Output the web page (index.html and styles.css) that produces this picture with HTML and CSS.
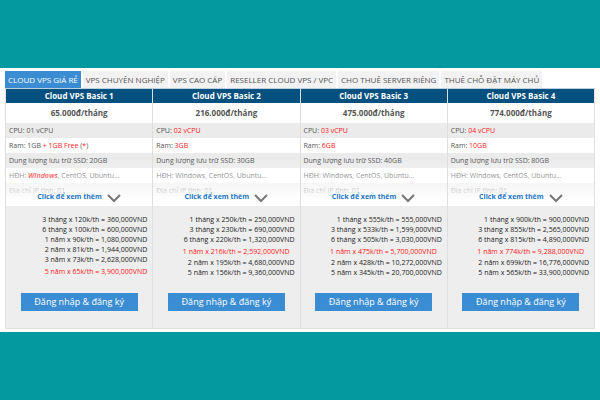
FILE: index.html
```
<!DOCTYPE html>
<html lang="vi">
<head>
    <meta charset="utf-8">
    <title>Cloud VPS</title>
    <link rel="stylesheet" href="styles.css">
</head>
<body>
    <main class="pricing">
        <nav class="tabs">
            <a class="active" href="#">CLOUD VPS GIÁ RẺ</a>
            <a href="#">VPS CHUYÊN NGHIỆP</a>
            <a href="#">VPS CAO CẤP</a>
            <a href="#">RESELLER CLOUD VPS / VPC</a>
            <a href="#">CHO THUÊ SERVER RIÊNG</a>
            <a href="#">THUÊ CHỖ ĐẶT MÁY CHỦ</a>
        </nav>

        <div class="plans">
            <section class="plan">
                <h2>Cloud VPS Basic 1</h2>
                <p class="price">65.000đ/tháng</p>
                <div class="specs">
                    <ul>
                        <li>CPU: 01 vCPU</li>
                        <li>Ram: 1GB <span class="red">+ 1GB Free</span> (<span class="red">*</span>)</li>
                        <li>Dung lượng lưu trữ SSD: 20GB</li>
                        <li>HĐH: <em class="red">Windows</em>, CentOS, Ubuntu...</li>
                        <li>Địa chỉ IP tĩnh: 01</li>
                    </ul>
                    <a class="more" href="#">Click để xem thêm
                        <svg width="14" height="10" viewBox="0 0 14 10"><path d="M1 2l6 6 6-6" /></svg>
                    </a>
                </div>
                <div class="offer">
                    <ul class="terms">
                        <li>3 tháng x 120k/th = 360,000VND</li>
                        <li>6 tháng x 100k/th = 600,000VND</li>
                        <li>1 năm x 90k/th = 1,080,000VND</li>
                        <li>2 năm x 81k/th = 1,944,000VND</li>
                        <li>3 năm x 73k/th = 2,628,000VND</li>
                        <li class="best">5 năm x 65k/th = 3,900,000VND</li>
                    </ul>
                    <button type="button">Đăng nhập &amp; đăng ký</button>
                </div>
            </section>

            <section class="plan">
                <h2>Cloud VPS Basic 2</h2>
                <p class="price">216.000đ/tháng</p>
                <div class="specs">
                    <ul>
                        <li>CPU: <span class="red">02 vCPU</span></li>
                        <li>Ram: <span class="red">3GB</span></li>
                        <li>Dung lượng lưu trữ SSD: 30GB</li>
                        <li>HĐH: Windows, CentOS, Ubuntu...</li>
                        <li>Địa chỉ IP tĩnh: 01</li>
                    </ul>
                    <a class="more" href="#">Click để xem thêm
                        <svg width="14" height="10" viewBox="0 0 14 10"><path d="M1 2l6 6 6-6" /></svg>
                    </a>
                </div>
                <div class="offer">
                    <ul class="terms">
                        <li>1 tháng x 250k/th = 250,000VND</li>
                        <li>3 tháng x 230k/th = 690,000VND</li>
                        <li>6 tháng x 220k/th = 1,320,000VND</li>
                        <li class="best inset">1 năm x 216k/th = 2,592,000VND</li>
                        <li>2 năm x 195k/th = 4,680,000VND</li>
                        <li>5 năm x 156k/th = 9,360,000VND</li>
                    </ul>
                    <button type="button">Đăng nhập &amp; đăng ký</button>
                </div>
            </section>

            <section class="plan">
                <h2>Cloud VPS Basic 3</h2>
                <p class="price">475.000đ/tháng</p>
                <div class="specs">
                    <ul>
                        <li>CPU: <span class="red">03 vCPU</span></li>
                        <li>Ram: <span class="red">6GB</span></li>
                        <li>Dung lượng lưu trữ SSD: 40GB</li>
                        <li>HĐH: Windows, CentOS, Ubuntu...</li>
                        <li>Địa chỉ IP tĩnh: 01</li>
                    </ul>
                    <a class="more" href="#">Click để xem thêm
                        <svg width="14" height="10" viewBox="0 0 14 10"><path d="M1 2l6 6 6-6" /></svg>
                    </a>
                </div>
                <div class="offer">
                    <ul class="terms">
                        <li>1 tháng x 555k/th = 555,000VND</li>
                        <li>3 tháng x 533k/th = 1,599,000VND</li>
                        <li>6 tháng x 505k/th = 3,030,000VND</li>
                        <li class="best inset">1 năm x 475k/th = 5,700,000VND</li>
                        <li>2 năm x 428k/th = 10,272,000VND</li>
                        <li>5 năm x 345k/th = 20,700,000VND</li>
                    </ul>
                    <button type="button">Đăng nhập &amp; đăng ký</button>
                </div>
            </section>

            <section class="plan">
                <h2>Cloud VPS Basic 4</h2>
                <p class="price">774.000đ/tháng</p>
                <div class="specs">
                    <ul>
                        <li>CPU: <span class="red">04 vCPU</span></li>
                        <li>Ram: <span class="red">10GB</span></li>
                        <li>Dung lượng lưu trữ SSD: 80GB</li>
                        <li>HĐH: Windows, CentOS, Ubuntu...</li>
                        <li>Địa chỉ IP tĩnh: 01</li>
                    </ul>
                    <a class="more" href="#">Click để xem thêm
                        <svg width="14" height="10" viewBox="0 0 14 10"><path d="M1 2l6 6 6-6" /></svg>
                    </a>
                </div>
                <div class="offer">
                    <ul class="terms">
                        <li>1 tháng x 900k/th = 900,000VND</li>
                        <li>3 tháng x 855k/th = 2,565,000VND</li>
                        <li>6 tháng x 815k/th = 4,890,000VND</li>
                        <li class="best inset">1 năm x 774k/th = 9,288,000VND</li>
                        <li>2 năm x 699k/th = 16,776,000VND</li>
                        <li>5 năm x 565k/th = 33,900,000VND</li>
                    </ul>
                    <button type="button">Đăng nhập &amp; đăng ký</button>
                </div>
            </section>
        </div>
    </main>
</body>
</html>
```

FILE: styles.css
```
* {
    box-sizing: border-box;
}
body {
    margin: 0;
    padding: 68px 0;
    background: #04999e;
    font-family: "Open Sans", "Noto Sans", sans-serif;
    font-size: 7px;
    color: #555;
}
h2, p, ul {
    margin: 0;
    padding: 0;
}
ul {
    list-style: none;
}
.pricing {
    background: white;
    padding: 3px 5px;
}
.tabs {
    display: flex;
    gap: 2px;
}
.tabs a {
    padding: 0 3px;
    background: #f2f2f2;
    color: #555;
    font-size: 8px;
    line-height: 17px;
    text-decoration: none;
    white-space: nowrap;
}
.tabs a.active {
    background: #3b8dd3;
    color: white;
}
.plans {
    display: grid;
    grid-template-columns: repeat(4, 1fr);
    border-top: 1px solid #b9d3e6;
    border-right: 1px solid #e2e2e2;
}
.plan {
    border-left: 1px solid #dedede;
}
.plan h2 {
    background: #04507f;
    color: white;
    font-size: 8px;
    font-weight: bold;
    line-height: 14px;
    text-align: center;
}
.price {
    font-size: 8px;
    font-weight: bold;
    line-height: 20px;
    text-align: center;
}
.specs {
    position: relative;
    height: 83px;
    overflow: hidden;
}
.specs li {
    padding-left: 3px;
    font-size: 7px;
    line-height: 15px;
}
.specs li:nth-child(odd) {
    background: #ebebeb;
}
.red {
    color: #ff2020;
}
em.red {
    font-weight: bold;
}
/* fades the lower rows out behind the link */
.more {
    position: absolute;
    left: 0;
    right: 0;
    bottom: 0;
    height: 46px;
    padding-top: 32px;
    display: flex;
    justify-content: center;
    gap: 5px;
    background: linear-gradient(rgba(255, 255, 255, 0), rgba(255, 255, 255, 0.7) 65%, white 90%);
    color: #2277c8;
    font-size: 7px;
    font-weight: bold;
    line-height: 10px;
    text-decoration: none;
}
.more svg {
    margin-top: 1px;
    fill: none;
    stroke: #777;
    stroke-width: 2;
}
.offer {
    background: #eee;
    border-bottom: 1px solid #dedede;
    padding: 9px 5px 17px;
}
.terms {
    font-size: 7px;
    line-height: 10px;
    color: #222;
    text-align: right;
    white-space: nowrap;
}
.terms .best {
    color: #ff1a1a;
    font-weight: 500;
    line-height: 13px;
}
.terms .inset {
    padding-right: 5px;
}
.offer button {
    display: block;
    width: 117px;
    height: 18px;
    margin: 15px auto 0;
    padding: 0;
    border: none;
    background: #3b8dd3;
    color: white;
    font-family: "Open Sans", "Noto Sans", sans-serif;
    font-size: 9px;
    line-height: 18px;
    cursor: pointer;
}
```
